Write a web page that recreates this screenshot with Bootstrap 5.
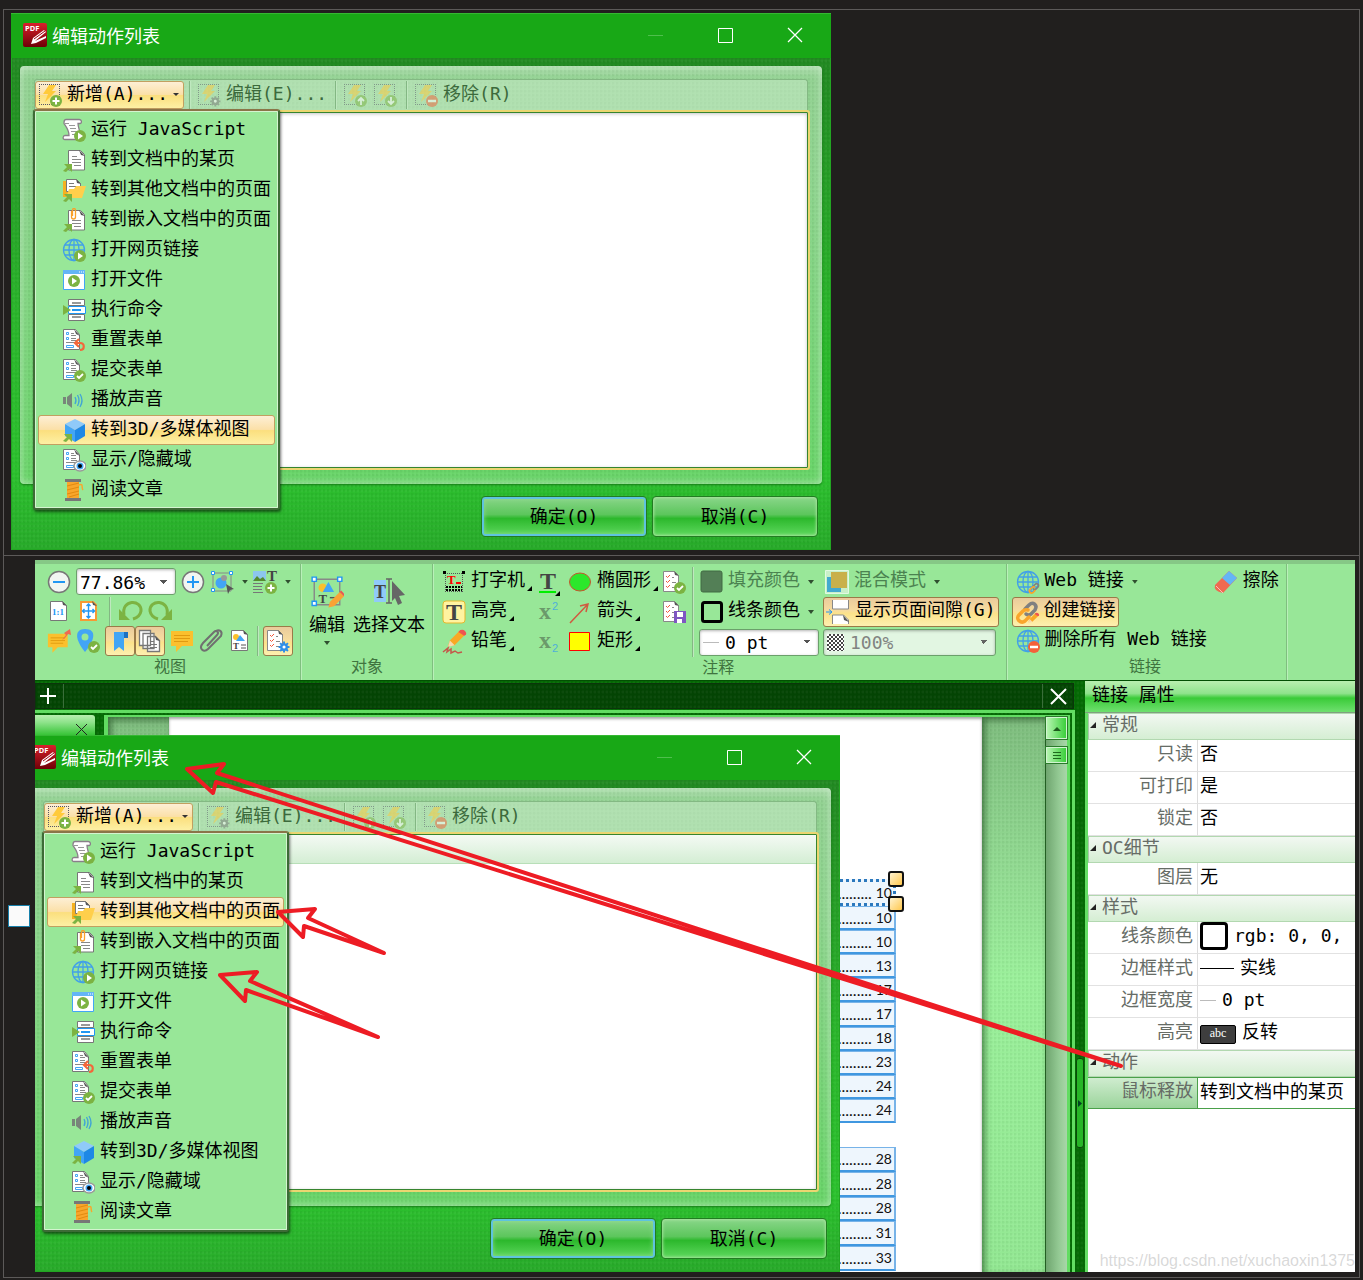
<!DOCTYPE html>
<html lang="zh-CN">
<head>
<meta charset="utf-8">
<meta name="viewport" content="width=device-width, initial-scale=1">
<title>编辑动作列表</title>
<link href="https://cdn.jsdelivr.net/npm/bootstrap@5.3.0/dist/css/bootstrap.min.css" rel="stylesheet">
<style>
:root{--weave:radial-gradient(circle at 1px 1px,rgba(0,50,0,.05) 1px,transparent 2px) 0 0/4px 4px,radial-gradient(circle at 3px 3px,rgba(255,255,255,.04) 1px,transparent 2px) 0 0/4px 5px}
body{background:#211f1e;color:#000;font:18px/26px "DejaVu Sans Mono","Noto Sans CJK SC",monospace;padding:9px 3px 2px}
button{font:inherit;color:inherit;border:0;background:none;padding:0;white-space:nowrap}
svg{display:block;flex:none}
.ic{width:24px;height:24px;overflow:visible}
.frame{border:1px solid #5c5a59}
.frame-top{padding:3px 7px 5px}
.frame-low{border-top:1px solid #5c5a59;padding:4px 4px 5px 4px;gap:5px}
input.pick[type=checkbox]{width:22px;height:22px;margin:0;border:1px solid #1780ab;border-radius:0;background:#fafafa}

/* dialog window */
.win{width:820px;max-width:100%;background:var(--weave),linear-gradient(#228a22,#228a22 55px,#2bb62c 300px,#2cc22e 460px,#28aa2a);box-shadow:inset 0 0 0 1px #22a522}
.win-title{background:#18a816;height:45px;padding:0 1px 2px 12px;color:#fff;border-top:1px solid #35b833;font-family:"Noto Sans CJK SC",sans-serif}
.win-title h2{font:inherit;margin:0 auto 0 5px}
.win-title button{width:70px;height:42px;display:flex;justify-content:center;align-items:center}
.win-title button:disabled{color:#4fbf4d}
.pane{margin:8px 9px 0;padding:13px 12px 14px 13px;border-radius:4px;background:var(--weave),linear-gradient(#a6dba6,#93d293 14px,#8ed48e 120px,#68d468);box-shadow:inset 0 0 8px rgba(225,245,225,.7),0 1px 2px rgba(0,60,0,.5)}
.tools{height:31px;margin:0 2px 0 1px;padding:1px 0;background:rgba(200,235,200,.55);border:1px solid #83b983;border-bottom:0;border-radius:3px 3px 0 0;color:#3c6a3c}
.tools>button,.tools .drop>button{height:28px;display:flex;align-items:center;gap:5px;padding:0 3px 0 2px}
.tools .drop>button{padding-right:4px}
.tools button:disabled .ic{opacity:.5}
.tools .step{padding:0 4px 0 2px}
.gold{background:linear-gradient(#fdefd5,#fbe0a8 48%,#fbdf7e 52%,#fdf0a4)!important;border:1px solid #c2a060!important;border-radius:3px;color:#000}
.sep{width:1px;align-self:stretch;background:#83b783;box-shadow:1px 0 #bfe8bf;margin:0 6px}
.tools .sep{margin:0 5px}
.list{height:360px;background:#fff;border:2px solid #ebd671;border-radius:3px;box-shadow:inset 0 0 0 1px #36852f,inset 0 1px 4px rgba(0,0,0,.35)}
.list-head{height:29px;margin:1px;background:linear-gradient(#f4faf4,#d4eed4);border-bottom:1px solid #b8dfb8}
.win-foot{padding:12px 13px 13px;gap:5px}
.cmd{width:166px;height:41px;border:1px solid #227c22;border-radius:4px;background:linear-gradient(#8ad68a,#5cc65c 45%,#2cb82c 55%,#5fd95f);box-shadow:inset 0 0 3px 1px rgba(170,230,160,.9)}
.cmd-main{box-shadow:inset 0 0 0 2px #5ec3df,inset 0 0 5px 2px rgba(150,220,150,.8)}
.acts{position:absolute;z-index:5;left:-2px;top:28px;width:247px;padding:4px 3px 3px;border:2px solid #3d6b36;border-top-color:#8a7548;border-radius:3px;background:#98e798;box-shadow:inset 0 0 0 1px #d4f4d0,1px 2px 3px rgba(0,0,0,.55);color:#000}
.acts button{width:100%;height:30px;display:flex;align-items:center;gap:5px;padding-left:23px;border:1px solid transparent}
.lbl{line-height:24px;padding-bottom:4px}
.acts span,.tools span{line-height:24px;padding-bottom:2px}

/* application */
.app{flex:1;min-width:0;min-height:712px;position:relative;overflow:hidden;background:var(--weave),#046a04}
.ribbon{height:121px;background:#98e798;border-top:4px solid #86c886;border-bottom:1px solid #034f03}
.grp{display:flex;flex-direction:column;padding:3px 7px 2px 5px;border-right:1px solid #7fbf7f;box-shadow:1px 0 #b9f0b9;margin:0}
.grp-name{margin-top:auto;text-align:center;font-size:16px;line-height:22px;color:#3f743f}
.line{display:flex;align-items:center;height:30px;gap:5px}
.line button{display:flex;align-items:center;gap:5px}
.line .on{height:30px;min-width:30px;justify-content:center;border-color:#9a7a48!important;background:linear-gradient(#e9cb9c,#f7dc9f 45%,#fce28a 55%,#fdf0b0)!important}
.line .wide{padding:0 2px}
.combo{display:flex;align-items:center;height:27px;background:#fff;border:1px solid #6ba06b;border-radius:3px;box-shadow:inset 0 1px 3px rgba(0,0,0,.3);padding-left:3px}
.combo select{appearance:none;border:0;flex:1;min-width:0;width:100%;height:24px;padding:0;color:#000;font:inherit;background:linear-gradient(45deg,transparent 50%,#555 50%) right 11px center/4px 4px no-repeat,linear-gradient(-45deg,transparent 50%,#555 50%) right 7px center/4px 4px no-repeat}
.combo.off{background:#e2f6e2}.combo.off select{color:#777;opacity:.9}
.zoomer{width:100px}.width-pick{width:120px}.opac{width:173px}
.dim{color:#4b8250}
.dd{width:6px;height:4px;background:#2f4f2f;clip-path:polygon(0 0,100% 0,50% 100%);margin-left:3px}
.cn{width:5px;height:5px;background:#000;clip-path:polygon(100% 0,100% 100%,0 100%);align-self:flex-end;margin-left:-3px;margin-bottom:5px}
.cn-over{margin-left:-10px;margin-bottom:-2px}
.big{display:flex;flex-direction:column;align-items:center;line-height:24px}
.hatch{width:17px;height:17px;background:repeating-conic-gradient(#444 0 25%,#fff 0 50%) 0 0/4px 4px;margin-right:6px}
.hair{width:16px;height:1px;background:#bbb;margin-right:6px}
.glyph{font-family:"Liberation Serif",serif;font-weight:700;fill:#444}
.pale{fill:#6b9a6b}
.pow{font-family:"Liberation Sans",sans-serif;font-size:11px;fill:#4fb0d8}

.side{width:270px;border-left:3px solid #65de65;background:#fff}
.side-head{height:32px;font:inherit;line-height:28px;margin:0 0 0 -3px;padding-left:7px;background:linear-gradient(#b9efb0,#8fe38c 40%,#3acb38 55%,#6fe06f);border-bottom:1px solid #7fa07f}
.props{width:100%;border-collapse:separate;border-spacing:0;line-height:24px}
.props th{font-weight:400;color:#666c66;padding:0;white-space:nowrap}
.props .sec th{height:27px;line-height:22px;padding-bottom:3px;background:linear-gradient(#f2f8f2,#d5eed3);border-top:1px solid #b2d8b0;border-bottom:1px solid #b2d8b0;border-left:1px solid #a9c8a9}
.sec b{display:inline-block;width:6px;height:6px;background:#222;clip-path:polygon(100% 0,100% 100%,0 100%);margin:0 6px 3px 1px}
.props tr:not(.sec){height:32px}
.props tr:not(.sec) th{width:110px;text-align:right;padding:0 4px 4px 0;border-right:1px solid #ddd;border-bottom:1px solid #e2e2e2}
.props td{padding:0 0 3px 2px;border-bottom:1px solid #e2e2e2;white-space:nowrap;overflow:hidden}
.props td>div{display:flex;align-items:center;gap:6px;height:28px}
.props .cur th{background:linear-gradient(#cfeccf,#9bd49b);border-color:#4aa04a!important;border-top:1px solid #4aa04a}
.props .cur td{border-color:#4aa04a;border-top:1px solid #4aa04a}
.box{width:28px;height:28px;border:3px solid #000;border-radius:4px;background:#fff}
.abc{width:36px;height:19px;background:#3e3e3e;border:1px solid #000;border-radius:2px;color:#fff;font:12px/15px "Liberation Serif",serif;text-align:center;margin-top:4px}

.tabs{height:26px;margin:2px 11px 0 0;background:var(--weave),#034403;border:1px solid #0b350b;color:#fff}
.tabs button{width:28px;height:24px;padding-right:4px;display:grid;place-items:center;border-right:1px solid #3a6e3a}
.tabs button:last-child{border-right:0;border-left:1px solid #3a6e3a;width:31px;padding:0}
.rim{margin:1px 10px 0 0;border-top:3px solid #62dc62;border-right:3px solid #62dc62;padding:2px 2px 0 0}
.flap{width:60px;height:24px;background:linear-gradient(#b9efb0,#8fe38c 30%,#2cc02c 90%);padding:8px 8px 0 0;border-radius:0 3px 0 0}
.view{margin-left:9px;border:solid #62dc62;border-width:2px 3px 0 4px}
.desk{background:var(--weave),linear-gradient(#7fbd7f,#93dc93 160px,#9bf09b 260px,#93e893);box-shadow:inset 3px 3px 6px rgba(0,40,0,.5)}
.sheet{background:#fff;padding:162px 86px 0 0;box-shadow:inset 0 2px 3px rgba(0,0,0,.35)}
.toc a{display:flex;align-items:center;justify-content:flex-end;flex:1;padding-right:2px;color:#111;background:#eef6fd;border:2px solid #77b3e8;border-bottom-color:#3f97e0;border-top-width:1px;font:14px/18px Lato,sans-serif;text-decoration:none;gap:4px}
.toc i{font-style:normal;font-size:16px}
.toc-a{height:244px}
.toc-b{height:124px;margin-top:24px}
.toc .sel{border:3px dotted #2b78bd;padding-right:1px}
.knob{position:absolute;right:-8px;width:16px;height:16px;border:2px solid #111;border-radius:3px;background:linear-gradient(135deg,#fff3d0,#ffc84e)}
.knob.k1{top:-8px}.knob.k2{top:17px}
.bar{width:22px;background:linear-gradient(90deg,#6fa56f,#93c993 60%,#a9d6a9);border-left:1px solid #225f22}
.bar button{height:22px;width:21px;display:grid;place-items:center;background:linear-gradient(90deg,#b5f5b0,#3bcf3b);border:1px solid #d0f5d0;outline:1px solid #2a7a2a}
.bar .thumb{height:16px;margin-top:8px}
.grip{position:absolute;right:271px;top:498px;width:8px;height:90px;border:1px solid #0a4a0a;border-radius:3px;background:#27b527}
.over{position:absolute;left:-15px;top:175px;z-index:3}
.ink{position:absolute;left:0;top:0;z-index:9;pointer-events:none}
.mark-url{position:absolute;right:0;bottom:1px;z-index:9;font:16px/20px "Liberation Sans",sans-serif;color:rgba(170,170,170,.45);white-space:nowrap}
</style>
</head>
<body>
<svg width="0" height="0" class="position-absolute" aria-hidden="true">
<defs>
<linearGradient id="red" x1="0" y1="0" x2="0" y2="1"><stop offset="0" stop-color="#d81f2c"/><stop offset="1" stop-color="#6e0006"/></linearGradient>
<g id="doc"><path d="M6.500 2.500h12l4 4v15.500h-16z" fill="#fff" stroke="#777"/><path d="M17 2l6 6-4-1z" fill="#555"/></g>
<g id="disc"><circle cx="18" cy="18" r="6" fill="#7cb342"/></g>
<g id="go"><path d="M1 23l4-4-3-3h8v8l-3-3-3 3z" fill="#7cb342"/></g>
<g id="bolt"><path d="M1 1.500h20M1 21.500h20M1.500 1v20M21.500 1v20" fill="none" stroke="#556" stroke-dasharray="1 1"/><path d="M11 2h7l-4 6h4L7 19l3-8H5z" fill="#ffca3a"/></g>
<g id="form"><path d="M1.500 1.500h12l4 5v15h-16z" fill="#fff" stroke="#777"/><path d="M12 1l6 7-4-2z" fill="#555"/><path d="M4.500 4.500h2v2h-2zM4.500 9.500h2v2h-2zM4.500 17.500h7v2h-7z" fill="none" stroke="#42a5f5"/><path d="M9 5.500h3M9 7.500h5M9 10.500h5M9 12.500h6M4 14.500h10" stroke="#888"/></g>
<g id="earth" fill="none" stroke="#42a0e8" stroke-width="1.300"><circle cx="12" cy="12" r="10.500"/><ellipse cx="12" cy="12" rx="5" ry="10.500"/><path d="M12 1.500v21M1.500 12h21M3 7h18M3 17h18"/></g>
<g id="check"><path d="M1.500 1.500h11l4 4v16h-15z" fill="#fff" stroke="#888"/><path d="M12 1l5 5-4-1z" fill="#555"/><path d="M4 6l1.500 1.500L8 5M4 11l1.500 1.500L8 10M4 16l1.500 1.500L8 15" fill="none" stroke="#f4573a"/><path d="M10 7.500h2M10 12.500h4M10 17.500h4" stroke="#888"/></g>
<g id="marquee"><path d="M3 3h18v18H3z" fill="none" stroke="#888"/><path d="M1.500 1.500h3v3h-3zM19.500 1.500h3v3h-3zM1.500 18.500h3v3h-3z" fill="#fff" stroke="#2196f3"/></g>
<g id="cog"><path d="M18 11v14M11 18h14M13 13l10 10M23 13L13 23" stroke-width="2.500"/><circle cx="18" cy="18" r="3.500" stroke-width="3" fill="#fff"/></g>
<g id="bubble"><path d="M1 2h22v15H12l-6 6v-6H1z" fill="#fbc02d"/><path d="M4 6.500h16M4 9.500h16M4 12.500h14" stroke="#e09a10"/></g>
<g id="chain" fill="none" stroke-width="3.500" stroke-linecap="round"><path d="M10 9l4-4c4-4 9 0 6 5l-4 4q-2 2-5 0" stroke="#808080"/><path d="M13 10q-3-1-5 1l-4 4c-4 4 2 9 6 6l4-4" stroke="#f9a52b"/></g>
<g id="crayon"><path d="M1 17l2-6L14 0l5 5L8 16z" fill="#f9a825"/><path d="M12 2l2-2q3-1 5 1t1 4l-2 1z" fill="#ef5350"/><path d="M3 11l5 5-7 2z" fill="#f7d9b0"/></g>

<symbol id="pdf" viewBox="0 0 24 24"><rect width="24" height="24" rx="2" fill="url(#red)"/><text x="2" y="8" font-size="7.500" font-weight="700" fill="#fff" font-family="Noto Sans">PDF</text><path d="M8 21l2-6 11-8 2 2-11 9 11-5v2l-10 5z" fill="#fff"/><path d="M11 16l11-8" stroke="#a00010"/></symbol>
<symbol id="i-add" viewBox="0 0 24 24"><use href="#bolt"/><use href="#disc"/><path d="M18 14.500v7M14.500 18h7" stroke="#fff" stroke-width="2"/></symbol>
<symbol id="i-edit" viewBox="0 0 24 24"><use href="#bolt"/><g stroke="#777" transform="translate(5 5) scale(.74)"><use href="#cog"/></g></symbol>
<symbol id="i-up" viewBox="0 0 24 24"><use href="#bolt"/><use href="#disc"/><path d="M18 22v-7M15 18l3-3 3 3" stroke="#fff" stroke-width="1.800" fill="none"/></symbol>
<symbol id="i-down" viewBox="0 0 24 24"><use href="#bolt"/><use href="#disc"/><path d="M18 14v7M15 18l3 3 3-3" stroke="#fff" stroke-width="1.800" fill="none"/></symbol>
<symbol id="i-rem" viewBox="0 0 24 24"><use href="#bolt"/><circle cx="18" cy="18" r="6" fill="#f4603a"/><path d="M14 18h8" stroke="#fff" stroke-width="2.500"/></symbol>
<symbol id="js" viewBox="0 0 24 24"><path d="M4 1.500h13c3 0 3 4 1 4h-2c0 5 3 9 3 16H3c-3 0-2-4 0-4h4c0-6-4-10-5-12 0-2 0-4 2-4z" fill="#fff" stroke="#8a7f8a" stroke-width="1.300"/><path d="M7 7.500h6M8 10.500h6M9 13.500h6M10 16.500h5M3 5.500h4" stroke="#999"/><use href="#disc"/><path d="M16 14.500v7l5-3.500z" fill="#fff"/></symbol>
<symbol id="page" viewBox="0 0 24 24"><use href="#doc"/><path d="M10 8.500h5M10 11.500h9M10 14.500h9M12 17.500h7" stroke="#888"/><use href="#go"/></symbol>
<symbol id="other" viewBox="0 0 24 24"><path d="M1 3h6v16H1z" fill="#f5b120"/><path d="M4.500 1.500h10l4 4v8h-14z" fill="#fff" stroke="#777"/><path d="M14 1l5 5-4-1z" fill="#555"/><path d="M7 5.500h5M7 8.500h8" stroke="#777"/><path d="M4 20l3-9h5l2-3h10l-4 12z" fill="#ffcf4b"/><use href="#go"/></symbol>
<symbol id="embed" viewBox="0 0 24 24"><use href="#doc"/><path d="M10 12.500h9M10 15.500h9M12 18.500h7" stroke="#888"/><path d="M9.500 3v6a2 2 0 004 0V2a1.500 1.500 0 00-3 0v6" fill="none" stroke="#f9a02b" stroke-width="1.300"/><use href="#go"/></symbol>
<symbol id="web" viewBox="0 0 24 24"><use href="#earth"/><use href="#disc"/><path d="M16 14.500v7l5-3.500z" fill="#fff"/></symbol>
<symbol id="openf" viewBox="0 0 24 24"><path d="M1.500 3h21v18.500h-21z" fill="#fff" stroke="#42a5f5"/><path d="M1 2h22v4H1z" fill="#64b5f6"/><path d="M17 4h5" stroke="#fff" stroke-dasharray="1 1"/><circle cx="12" cy="13" r="6" fill="#7cb342"/><path d="M10 9.500v7l5-3.500z" fill="#fff"/></symbol>
<symbol id="cmd" viewBox="0 0 24 24"><path d="M6.500 1.500h16v6h-16zM6.500 16.500h16v6h-16z" fill="#fff" stroke="#777"/><path d="M6.500 8.500h17v7h-17z" fill="#fff" stroke="#2196f3"/><path d="M10 5h9M10 19h9" stroke="#999" stroke-width="2"/><path d="M10 12h9" stroke="#2196f3" stroke-width="2"/><path d="M1 7l8 5-8 5z" fill="#7cb342"/></symbol>
<symbol id="reset" viewBox="0 0 24 24"><use href="#form"/><path d="M17 11l-4 4 4 4M13 15h5c5 0 5 7 0 7" fill="none" stroke="#f4663a" stroke-width="2.200"/></symbol>
<symbol id="submit" viewBox="0 0 24 24"><use href="#form"/><use href="#disc"/><path d="M15 18l2 2 4-4" fill="none" stroke="#fff" stroke-width="1.800"/></symbol>
<symbol id="sound" viewBox="0 0 24 24"><path d="M1 9h3v7H1zM5 9l5-4v15l-5-4z" fill="#78857a"/><path d="M13 9q2 3.500 0 7M15.500 7q3 5.500 0 11M18 6q4 6.500 0 13" fill="none" stroke="#42a5d5" stroke-width="1.300"/></symbol>
<symbol id="cube" viewBox="0 0 24 24"><path d="M13 1l10 5-10 6L3 6z" fill="#90caf9"/><path d="M3 6l10 6v12L3 18z" fill="#42a5f5"/><path d="M23 6l-10 6v12l10-6z" fill="#1e88e5"/><use href="#go"/></symbol>
<symbol id="showhide" viewBox="0 0 24 24"><use href="#form"/><ellipse cx="18" cy="18" rx="6" ry="5" fill="#fff" stroke="#999" stroke-width="1.500"/><circle cx="18" cy="18" r="3.500" fill="#42a5f5"/><circle cx="18" cy="18" r="2" fill="#000"/></symbol>
<symbol id="spool" viewBox="0 0 24 24"><path d="M3 1h16v3H3zM3 20h16v3H3z" fill="#777"/><path d="M5 4h12v16H5z" fill="#f9a62b"/><path d="M5 8l12-3M5 12l12-3M5 16l12-3M7 19l10-3" stroke="#e08a10"/><path d="M17 7c5-2 2 3 4 5" fill="none" stroke="#f9a62b" stroke-width="1.500"/></symbol>
<symbol id="caret" viewBox="0 0 6 4"><path d="M0 0h6L3 3z" fill="#333"/></symbol>
<symbol id="close" viewBox="0 0 16 16"><path d="M1 1l14 14M15 1L1 15" stroke="currentColor" stroke-width="1.300"/></symbol>
<symbol id="round" viewBox="0 0 24 24"><circle cx="12" cy="12" r="10.500" fill="#f1f5f1" stroke="#777" stroke-width="1.500"/><path d="M6 12h12" stroke="#2196f3" stroke-width="2"/></symbol>
</defs>
</svg>

<main class="frame">
  <section class="frame-top">
    <div class="win" id="dialog" role="dialog" aria-label="编辑动作列表">
      <header class="win-title d-flex align-items-center">
        <svg class="ic"><use href="#pdf"/></svg><h2>编辑动作列表</h2>
        <button disabled aria-label="最小化"><svg width="15" height="15"><path d="M0 7.500h15" stroke="currentColor"/></svg></button>
        <button aria-label="最大化"><svg width="15" height="15"><path d="M.5.5h14v14H.5z" fill="none" stroke="currentColor"/></svg></button>
        <button aria-label="关闭"><svg width="16" height="16"><use href="#close"/></svg></button>
      </header>
      <div class="pane">
        <div class="tools d-flex">
          <div class="drop position-relative">
            <button class="gold"><svg class="ic"><use href="#i-add"/></svg><span>新增(A)...</span><svg width="6" height="4"><use href="#caret"/></svg></button>
            <div class="acts">
              <button><svg class="ic"><use href="#js"/></svg><span>运行 JavaScript</span></button>
              <button><svg class="ic"><use href="#page"/></svg><span>转到文档中的某页</span></button>
              <button><svg class="ic"><use href="#other"/></svg><span>转到其他文档中的页面</span></button>
              <button><svg class="ic"><use href="#embed"/></svg><span>转到嵌入文档中的页面</span></button>
              <button><svg class="ic"><use href="#web"/></svg><span>打开网页链接</span></button>
              <button><svg class="ic"><use href="#openf"/></svg><span>打开文件</span></button>
              <button><svg class="ic"><use href="#cmd"/></svg><span>执行命令</span></button>
              <button><svg class="ic"><use href="#reset"/></svg><span>重置表单</span></button>
              <button><svg class="ic"><use href="#submit"/></svg><span>提交表单</span></button>
              <button><svg class="ic"><use href="#sound"/></svg><span>播放声音</span></button>
              <button class="gold"><svg class="ic"><use href="#cube"/></svg><span>转到3D/多媒体视图</span></button>
              <button><svg class="ic"><use href="#showhide"/></svg><span>显示/隐藏域</span></button>
              <button><svg class="ic"><use href="#spool"/></svg><span>阅读文章</span></button>
            </div>
          </div>
          <i class="sep"></i>
          <button disabled><svg class="ic"><use href="#i-edit"/></svg><span>编辑(E)...</span></button>
          <i class="sep"></i>
          <button disabled class="step" aria-label="上移"><svg class="ic"><use href="#i-up"/></svg></button>
          <button disabled class="step" aria-label="下移"><svg class="ic"><use href="#i-down"/></svg></button>
          <i class="sep"></i>
          <button disabled><svg class="ic"><use href="#i-rem"/></svg><span>移除(R)</span></button>
        </div>
        <div class="list"></div>
      </div>
      <footer class="win-foot d-flex justify-content-end">
        <button class="cmd cmd-main"><span class="lbl">确定(O)</span></button>
        <button class="cmd"><span class="lbl">取消(C)</span></button>
      </footer>
    </div>
  </section>

  <section class="frame-low d-flex align-items-center">
    <input type="checkbox" class="form-check-input pick flex-shrink-0" aria-label="选择">
    <div class="app d-flex flex-column align-self-stretch" id="app">
      <div class="ribbon d-flex">
        <div class="grp ps-2 ms-1">
          <div class="line">
            <button aria-label="缩小"><svg class="ic"><use href="#round"/></svg></button>
            <div class="combo zoomer"><select aria-label="缩放"><option>77.86%</option></select></div>
            <button aria-label="放大"><svg class="ic"><use href="#round"/><path d="M12 6v12" stroke="#2196f3" stroke-width="2"/></svg></button>
            <button aria-label="选择对象"><svg class="ic"><use href="#marquee"/><circle cx="11" cy="13" r="5.500" fill="#42a5f5"/><circle cx="14" cy="8" r="3" fill="#999"/><path d="M16 14l8 5-4 1-2 4z" fill="#555"/></svg><span class="dd"></span></button>
            <button aria-label="添加文本"><svg class="ic"><path d="M0 1h13v10H0z" fill="#8cc6ee"/><path d="M0 11l4-5 3 3 3-2 3 4z" fill="#558b2f"/><text class="glyph" x="14" y="11" font-size="15">T</text><path d="M0 13.500h10M0 16.500h9M0 19.500h9M0 22.500h10" stroke="#777"/><use href="#disc"/><path d="M18 14.500v7M14.500 18h7" stroke="#fff" stroke-width="2"/></svg><span class="dd"></span></button>
          </div>
          <div class="line">
            <button aria-label="实际大小"><svg class="ic" viewBox="-2 0 24 24"><path d="M1.500 2.500h12l4 4v15h-16z" fill="#fff" stroke="#777"/><path d="M13 2l5 5-4-1z" fill="#555"/><text x="3" y="16" font-size="9" font-weight="700" fill="#2196f3" font-family="Liberation Serif">1:1</text></svg></button>
            <button aria-label="适合页面"><svg class="ic" viewBox="-3 0 24 24"><path d="M2 3h12l3 3v15H2z" fill="#fff" stroke="#f79a33" stroke-width="2"/><path d="M13 2l5 5-4-1z" fill="#555"/><path d="M9.500 5v14M3.500 12h12M7.500 7l2-2 2 2M7.500 17l2 2 2-2M5.500 10l-2 2 2 2M13.500 10l2 2-2 2" fill="none" stroke="#2196f3" stroke-width="1.400"/></svg></button>
            <i class="sep mx-1"></i>
            <button aria-label="撤销"><svg class="ic"><path d="M5 16C2 0 23 0 22 12q-1 6-8 8" fill="none" stroke="#7cb342" stroke-width="3"/><path d="M0 10v11h11z" fill="#7cb342"/></svg></button>
            <button aria-label="重做"><svg class="ic"><path d="M19 16C22 0 1 0 2 12q1 6 8 8" fill="none" stroke="#7cb342" stroke-width="3"/><path d="M24 10v11H13z" fill="#7cb342"/></svg></button>
          </div>
          <div class="line">
            <button aria-label="批注"><svg class="ic"><use href="#bubble" transform="translate(0 3) scale(.9)"/><path d="M15 11l4-5-2-2 6-4 1 6-3-1-3 4z" fill="#ef6a50"/></svg></button>
            <button aria-label="位置"><svg class="ic"><path d="M9 0c12 0 10 11 0 23C-1 11-2 0 9 0z" fill="#42a5f5"/><circle cx="9" cy="8" r="3.500" fill="#98e798"/><use href="#disc"/><path d="M15 18l2 2 4-4" fill="none" stroke="#fff" stroke-width="1.800"/></svg></button>
            <div class="d-flex">
              <button class="gold on" aria-label="书签"><svg class="ic"><path d="M6 3h13v6h-3v13l-5-4-5 4z" fill="#42a5f5"/><path d="M16 3h4v6h-4z" fill="#1e70c0"/></svg></button>
              <button class="gold on" aria-label="缩略图"><svg class="ic"><path d="M1.500 1.500h11v15h-11zM5 4.500h11v15H5zM9.500 7.500h8l4 4v11h-12z" fill="#fff" stroke="#777" stroke-width="1.300"/><path d="M12 12.500h4M12 15.500h7M12 18.500h7" stroke="#777"/><path d="M17 7l5 5-4-1z" fill="#555"/></svg></button>
            </div>
            <button aria-label="评论"><svg class="ic"><use href="#bubble"/></svg></button>
            <button aria-label="附件"><svg class="ic"><path d="M8 17L18 6c3-3-1-5-3-3L4 14c-5 6 1 10 5 6L22 7c2-5-2-7-5-5" fill="none" stroke="#707070" stroke-width="2"/></svg></button>
            <button aria-label="内容"><svg class="ic"><path d="M3.500 1.500h12l4 4v16h-16z" fill="#fff" stroke="#777"/><path d="M15 1l5 5-4-1z" fill="#555"/><circle cx="8" cy="8" r="3" fill="#fbc02d"/><path d="M12 6l5 6H8z" fill="#42a5f5"/><text class="glyph" x="5" y="20" font-size="9">T</text><path d="M13 16h5M13 19h5" stroke="#555"/></svg></button>
            <i class="sep mx-0"></i>
            <button class="gold on" aria-label="属性"><svg class="ic"><use href="#check"/><g stroke="#2f8fe8" transform="translate(4 4) scale(.78)"><use href="#cog"/></g></svg></button>
          </div>
          <div class="grp-name">视图</div>
        </div>
        <div class="grp ps-2">
          <div class="d-flex gap-2 pt-2">
            <button class="big"><svg width="34" height="34" viewBox="0 0 24 24"><use href="#marquee"/><circle cx="9" cy="9" r="3" fill="#fbc02d"/><path d="M13 5l4 7H9z" fill="#42a5f5"/><text class="glyph" x="6" y="20" font-size="9">T</text><path d="M14 16h4" stroke="#555"/><path d="M13 23l1-4 7-7 3 3-7 7z" fill="#f9a235"/><path d="M21 12l1-1 3 3-1 1z" fill="#ef5350"/></svg><span class="mt-1">编辑</span><span class="dd ms-0 mt-1"></span></button>
            <button class="big"><svg width="34" height="34" viewBox="0 0 34 34"><path d="M2 5h12v22H2z" fill="#90caf9"/><text class="glyph" x="2" y="23" font-size="18">T</text><path d="M14 4h6M17 4v24M14 28h6" stroke="#666" stroke-width="1.500"/><path d="M20 6l13 14-6 1 3 7-4 2-3-7-3 3z" fill="#666"/></svg><span class="mt-1">选择文本</span></button>
          </div>
          <div class="grp-name">对象</div>
        </div>
        <div class="grp">
          <div class="d-flex">
            <div class="pe-1 ps-1">
              <div class="line"><button><svg class="ic"><path d="M3 3.500h18M3 21.500h18M3.500 3v19M20.500 3v19" fill="none" stroke="#555" stroke-dasharray="1 1"/><path d="M1 1h3v3H1zM20 1h3v3h-3z"/><text x="5" y="14" font-size="13" font-weight="700" font-family="Liberation Serif" fill="red">T</text><path d="M14 12h5v2h-5z" fill="red"/><path d="M4 17h16M4 20h16" stroke="#000" stroke-width="2" stroke-dasharray="2 1"/></svg><span class="lbl">打字机</span><i class="cn"></i></button></div>
              <div class="line"><button><svg class="ic"><rect x="1" y="1" width="22" height="22" rx="3" fill="#fff3a0" stroke="#e5b72c"/><text class="glyph" x="4" y="20" font-size="24">T</text></svg><span class="lbl">高亮</span><i class="cn"></i></button></div>
              <div class="line"><button><svg class="ic"><g transform="translate(5 0) scale(.95)"><use href="#crayon"/></g><path d="M1 22l5-4-1 4 4-3 0 4 4-2 3 2 4-1" fill="none" stroke="#c4584a" stroke-width="1.500"/></svg><span class="lbl">铅笔</span><i class="cn"></i></button></div>
            </div>
            <div class="pe-2">
              <div class="line"><button aria-label="下划线"><svg class="ic"><text class="glyph" x="4" y="19" font-size="24">T</text><path d="M3 22h17" stroke="#0e0" stroke-width="2"/></svg><i class="cn cn-over"></i></button></div>
              <div class="line"><button disabled aria-label="上标"><svg class="ic"><text class="glyph pale" x="3" y="19" font-size="24">x</text><text class="pow" x="16" y="10">2</text></svg></button></div>
              <div class="line"><button disabled aria-label="下标"><svg class="ic"><text class="glyph pale" x="3" y="18" font-size="24">x</text><text class="pow" x="16" y="22">2</text></svg></button></div>
            </div>
            <div class="pe-1">
              <div class="line"><button><svg class="ic"><ellipse cx="12" cy="12" rx="10.500" ry="9" fill="#2be82b" stroke="#c4562c"/></svg><span class="lbl">椭圆形</span><i class="cn"></i></button></div>
              <div class="line"><button><svg class="ic"><path d="M2 23L20 4M12 6l8-2-2 8" fill="none" stroke="#d05a40" stroke-width="1.500"/></svg><span class="lbl">箭头</span><i class="cn"></i></button></div>
              <div class="line"><button><svg class="ic"><path d="M1.500 2.500h20v18h-20z" fill="#ff0" stroke="red"/></svg><span class="lbl">矩形</span><i class="cn"></i></button></div>
            </div>
            <div>
              <div class="line"><button aria-label="应用"><svg class="ic"><use href="#check"/><use href="#disc"/><path d="M15 18l2 2 4-4" fill="none" stroke="#fff" stroke-width="1.800"/></svg></button></div>
              <div class="line"><button aria-label="保存样式"><svg class="ic"><use href="#check"/><path d="M12 11h12v12H12z" fill="#7e57c2"/><path d="M15 12h6v5h-6zM15 19h5v4h-5z" fill="#fff"/></svg></button></div>
            </div>
            <i class="sep"></i>
            <div>
              <div class="line"><button disabled class="dim"><svg class="ic"><rect x="2" y="1" width="21" height="21" rx="2" fill="#537f56" stroke="#416b43"/></svg><span class="lbl">填充颜色</span><i class="dd"></i></button></div>
              <div class="line"><button><svg class="ic"><rect x="3.500" y="2.500" width="19" height="19" rx="2" fill="none" stroke="#000" stroke-width="3"/></svg><span class="lbl">线条颜色</span><i class="dd"></i></button></div>
              <div class="line"><div class="combo width-pick"><i class="hair"></i><select aria-label="线宽"><option>0 pt</option></select></div></div>
            </div>
            <div class="ps-1">
              <div class="line"><button disabled class="dim wide"><svg class="ic"><path d="M.5.5h23v23H.5z" fill="#c9f0c9" stroke="#e2fae2"/><path d="M2 7h14v15H2z" fill="#43a9cf"/><path d="M6 2h16v16H6z" fill="#c9b04b"/></svg><span class="lbl">混合模式</span><i class="dd"></i></button></div>
              <div class="line"><button class="gold on wide"><svg class="ic"><path d="M6.500 0v9h16V0M6.500 24v-9h11l5 5v4" fill="#fff" stroke="#888"/><path d="M17 15l6 7-5-2z" fill="#555"/><path d="M0 12h5M3 9.500l3 2.500-3 2.500" stroke="#2196f3" fill="none"/></svg><span class="lbl">显示页面间隙(G)</span></button></div>
              <div class="line"><div class="combo off opac"><i class="hatch"></i><select disabled aria-label="不透明度"><option>100%</option></select></div></div>
            </div>
          </div>
          <div class="grp-name">注释</div>
        </div>
        <div class="grp">
          <div class="line ps-1"><button><svg class="ic"><use href="#earth"/><g transform="translate(12 12) scale(.5)"><use href="#chain"/></g></svg><span class="lbl">Web 链接</span><i class="dd"></i></button>
            <button class="ms-auto"><svg class="ic"><path d="M1 15L15 1l8 7L9 23q-10-2-8-8z" fill="#ef6a50"/><path d="M8 8l7-7 8 7-7 7z" fill="#64b5f6"/><path d="M2 16l7 7" stroke="#fbb"/></svg><span class="lbl">擦除</span></button></div>
          <div class="line"><button class="gold on wide"><svg class="ic"><use href="#chain"/><g transform="translate(13 13) scale(.55)"><use href="#crayon"/></g></svg><span class="lbl">创建链接</span></button></div>
          <div class="line ps-1"><button class="me-5 pe-4"><svg class="ic"><use href="#earth"/><circle cx="18" cy="18" r="6" fill="#f4603a"/><path d="M14 18h8" stroke="#fff" stroke-width="2.500"/></svg><span class="lbl">删除所有 Web 链接</span></button></div>
          <div class="grp-name">链接</div>
        </div>
      </div>

      <div class="d-flex flex-fill">
        <div class="flex-fill d-flex flex-column">
          <div class="tabs d-flex justify-content-between"><button aria-label="新建标签"><svg width="16" height="16"><path d="M8 0v16M0 8h16" stroke="#fff" stroke-width="2"/></svg></button><button aria-label="关闭标签"><svg width="17" height="17"><path d="M1 1l15 15M16 1L1 16" stroke="#fff" stroke-width="2"/></svg></button></div>
          <div class="rim d-flex flex-fill">
            <div class="flap d-flex justify-content-end"><svg width="11" height="12"><path d="M0 1l11 11M11 1L0 12" stroke="#222"/></svg></div>
            <div class="view d-flex flex-fill">
              <div class="desk" style="width:61px"></div>
              <div class="sheet flex-fill">
                <div class="toc toc-a d-flex flex-column position-relative">
                  <a class="sel" href="#"><i>.........</i>10</a><a href="#"><i>.........</i>10</a><a href="#"><i>.........</i>10</a><a href="#"><i>.........</i>13</a><a href="#"><i>.........</i>17</a><a href="#"><i>.........</i>17</a><a href="#"><i>.........</i>18</a><a href="#"><i>.........</i>23</a><a href="#"><i>.........</i>24</a><a href="#"><i>.........</i>24</a>
                  <span class="knob k1"></span><span class="knob k2"></span>
                </div>
                <div class="toc toc-b d-flex flex-column">
                  <a href="#"><i>.........</i>28</a><a href="#"><i>.........</i>28</a><a href="#"><i>.........</i>28</a><a href="#"><i>.........</i>31</a><a href="#"><i>.........</i>33</a>
                </div>
              </div>
              <div class="desk" style="width:63px"></div>
              <div class="bar"><button aria-label="向上滚动"><svg width="8" height="5"><path d="M0 5l4-4 4 4z" fill="#1d5a1d"/></svg></button><button class="thumb" aria-label="滚动条"><svg width="8" height="8"><path d="M0 1.500h8M0 4.500h8M0 7.500h8" stroke="#1d6a1d"/></svg></button></div>
            </div>
          </div>
        </div>
        <aside class="side flex-shrink-0">
          <h3 class="side-head">链接 属性</h3>
          <table class="props">
            <tr class="sec"><th colspan="2"><b></b>常规</th></tr>
            <tr><th>只读</th><td>否</td></tr>
            <tr><th>可打印</th><td>是</td></tr>
            <tr><th>锁定</th><td>否</td></tr>
            <tr class="sec"><th colspan="2"><b></b>OC细节</th></tr>
            <tr><th>图层</th><td>无</td></tr>
            <tr class="sec"><th colspan="2"><b></b>样式</th></tr>
            <tr><th>线条颜色</th><td><div><i class="box"></i>rgb: 0, 0,</div></td></tr>
            <tr><th>边框样式</th><td><div><svg width="34" height="1"><path d="M0 .5h34" stroke="#000"/></svg>实线</div></td></tr>
            <tr><th>边框宽度</th><td><div><i class="hair me-0"></i>0 pt</div></td></tr>
            <tr><th>高亮</th><td><div><span class="abc">abc</span>反转</div></td></tr>
            <tr class="sec"><th colspan="2"><b></b>动作</th></tr>
            <tr class="cur"><th>鼠标释放</th><td>转到文档中的某页</td></tr>
          </table>
        </aside>
      </div>
      <button class="grip" aria-label="展开面板"><svg width="5" height="7"><path d="M1 0l4 3.500L1 7z" fill="#042"/></svg></button>

      <svg class="ink" width="1320" height="712" viewBox="35 560 1320 712" fill="none" stroke="#ed1c24" stroke-width="4" stroke-linejoin="round" stroke-linecap="round">
        <path d="M1121 1066L217 773l7-9-37 5 26 24 3-11z"/>
        <path d="M384 953l-76-35 7-9-37 3 25 25 1-11z"/>
        <path d="M378 1037l-128-56 7-9-37 3 25 26 1-11z"/>
      </svg>
      <span class="mark-url">https://blog.csdn.net/xuchaoxin1375</span>
    </div>
  </section>
</main>
<script src="https://cdn.jsdelivr.net/npm/bootstrap@5.3.0/dist/js/bootstrap.bundle.min.js"></script>
<script>
// The same dialog floats over the application, with another menu item active
const copy = document.getElementById('dialog').cloneNode(true);
copy.removeAttribute('id');
copy.classList.add('over');
copy.querySelector('.acts .gold').classList.remove('gold');
copy.querySelectorAll('.acts button')[2].classList.add('gold');
copy.querySelector('.list').innerHTML = '<div class="list-head"></div>';
document.getElementById('app').append(copy);
</script>
</body>
</html>
